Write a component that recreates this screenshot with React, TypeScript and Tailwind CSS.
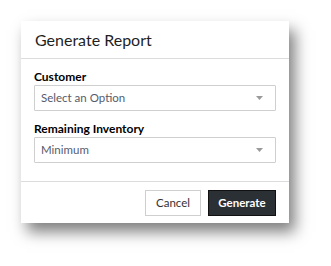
export default function App() {
  const fields = [
    { label: "Customer", value: "Select an Option" },
    { label: "Remaining Inventory", value: "Minimum" },
  ];

  return (
    <div className="w-[331px] h-[266px] bg-white pt-[21px] pl-[21px] font-['Lato','Liberation_Sans',sans-serif] text-[#222]">
      <div className="w-[268px] bg-white shadow-[6px_9px_14px_rgba(0,0,0,0.5)]">
        {/* Header */}
        <div className="h-[38px] px-[14px] flex items-center border-b border-[#dcdcdc]">
          <h1 className="text-[16px] leading-none text-[#1f1f1f]">Generate Report</h1>
        </div>

        {/* Body */}
        <div className="px-[13px] pt-[10px] pb-[18px] flex flex-col gap-[10px]">
          {fields.map((f) => (
            <div key={f.label} className="flex flex-col">
              <label className="text-[12px] leading-[16px] font-bold text-black">{f.label}</label>
              <div className="h-[26px] border border-[#cfcfcf] rounded-[1px] flex items-center justify-between pl-[6px] pr-[12px]">
                <span className="text-[11.5px] text-[#565b6b]">{f.value}</span>
                <svg width="7" height="4" viewBox="0 0 7 4">
                  <path d="M0 0 L7 0 L3.5 4 Z" fill="#9a9a9a" />
                </svg>
              </div>
            </div>
          ))}
        </div>

        {/* Footer */}
        <div className="border-t border-[#dcdcdc] pt-[8px] pb-[7px] px-[13px] flex justify-end gap-[7px]">
          <button className="h-[26px] w-[56px] border border-[#cfcfcf] bg-white text-[11.5px] text-[#333]">
            Cancel
          </button>
          <button className="h-[26px] w-[68px] border border-[#111] bg-[#2b3035] text-[11.5px] font-bold text-white">
            Generate
          </button>
        </div>
      </div>
    </div>
  );
}
